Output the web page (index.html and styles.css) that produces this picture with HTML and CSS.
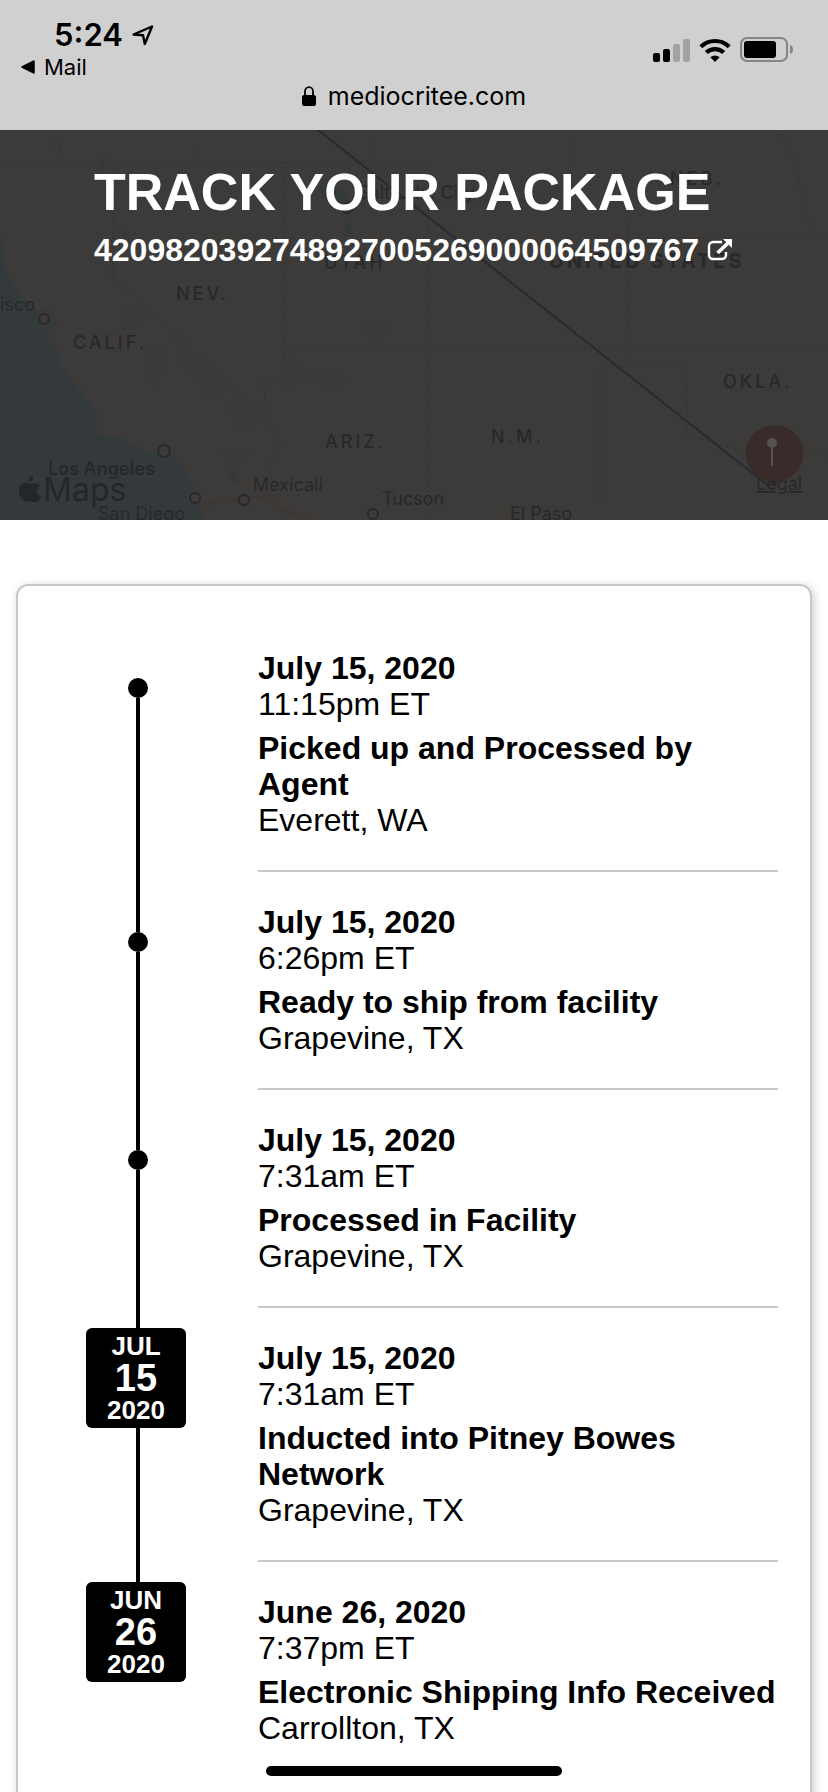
FILE: index.html
```
<!DOCTYPE html>
<html lang="en">
<head>
  <meta charset="UTF-8" />
  <meta name="viewport" content="width=device-width, initial-scale=1.0"/>
  <title>Track Your Package</title>
  <link rel="stylesheet" href="styles.css">
</head>
<body>
  <header class="browser-bar">
    <div class="status-row">
      <div class="status-left">
        <div class="clock">
          <span>5:24</span>
          <svg width="22" height="21" viewBox="0 0 22 21" aria-hidden="true">
            <path d="M1.500 9.500 20 1.500 12.800 19 11 10.300Z" fill="none" stroke="#000" stroke-width="2.400" stroke-linejoin="round"/>
          </svg>
        </div>
        <a class="back-link" href="#">
          <svg width="14" height="14" viewBox="0 0 14 14" aria-hidden="true">
            <path d="M1 7 13 1v12Z" stroke="#000" stroke-width="1.500" stroke-linejoin="round"/>
          </svg>
          Mail
        </a>
      </div>
      <div class="status-icons">
        <svg width="37" height="24" viewBox="0 0 37 24" aria-hidden="true">
          <rect x="0" y="15" width="7" height="9" rx="2"/>
          <rect x="10" y="11" width="7" height="13" rx="2"/>
          <rect x="20" y="6" width="7" height="18" rx="2" fill="#a2a2a2"/>
          <rect x="30" y="1" width="7" height="23" rx="2" fill="#a2a2a2"/>
        </svg>
        <svg width="32" height="24" viewBox="0 0 32 24" aria-hidden="true">
          <g fill="none" stroke="#000" stroke-width="4.200">
            <path d="M1.800 8.700a20.500 20.500 0 0 1 28.400 0"/>
            <path d="M7.300 14.600a12.500 12.500 0 0 1 17.400 0"/>
          </g>
          <path d="M16 24l-4.600-4.700a6.600 6.600 0 0 1 9.200 0Z"/>
        </svg>
        <svg width="54" height="25" viewBox="0 0 54 25" aria-hidden="true">
          <rect x="1" y="1" width="46" height="23" rx="6" fill="none" stroke="#858585" stroke-width="2"/>
          <rect x="4" y="4" width="32" height="17" rx="3"/>
          <path d="M50 8q3 1 3 4.500T50 17Z" fill="#858585"/>
        </svg>
      </div>
    </div>
    <div class="address">
      <svg width="14" height="20" viewBox="0 0 14 20" aria-hidden="true">
        <path d="M3 10V5.500a4 4.300 0 0 1 8 0V10" fill="none" stroke="#000" stroke-width="1.800"/>
        <rect x="0" y="9" width="14" height="11" rx="2"/>
      </svg>
      <span>mediocritee.com</span>
    </div>
  </header>

  <main>
    <section class="hero">
      <svg class="map" viewBox="0 130 828 390" preserveAspectRatio="xMidYMid slice">
        <rect y="130" width="828" height="390" fill="#3c3b39"/>
        <!-- ocean and lakes -->
        <g fill="#34393c">
          <path d="M0 236 4 246 6 270 14 285 26 300 36 310 44 325 50 344 62 352 60 364 76 386 90 402 97 410 97 434 118 436 138 446 148 451 164 453 180 464 192 480 196 500 204 520H0Z"/>
          <path d="M42 306l8 6 8 14-8 3-6-9Z"/>
          <path d="M53 139l6 2 4 9-3 3-4-6Z"/>
          <path d="M100 158q3-3 5 3l-2 12-5-6Z"/>
          <path d="M123 230l5 4 2 9-5-2Z"/>
          <path d="M111 267q5-3 6 5-1 7-4 6-4-3-2-11Z"/>
          <path d="M318 186l10-5 16 12 8 12-6 5-18-6Z"/>
          <path d="M346 223l5 2 1 9-7-2Z"/>
          <path d="M227 469l5 1 8 9-2 6-7-5Z"/>
        </g>
        <!-- parks and dry basins -->
        <g fill="#393a39">
          <path d="M174 340q26 20 44 45v10l-12-2-22-28Z"/>
          <path d="M228 408q20-12 31 2l-6 14-17 3Z"/>
          <path d="M150 345h12l-2 30-6 15-8-30Z"/>
          <path d="M288 358l12 10 34 2 14 12-10 4-34-5-18 5Z"/>
          <path d="M366 322h22l-6 20-14-4Z"/>
          <path d="M220 451l12 4 18-3-6 11-18-3Z"/>
          <path d="M121 308h14l4 16-16 6Z"/>
        </g>
        <!-- state lines -->
        <g class="borders">
          <path d="M0 162H370"/>
          <path d="M370 136v26h58"/>
          <path d="M199 150v12"/>
          <path d="M113 162v113L264 420"/>
          <path d="M284 162V382H264L266 415 281 445 270 460 270 475"/>
          <path d="M284 348H828"/>
          <path d="M428 210V520"/>
          <path d="M571 140v60H428"/>
          <path d="M628 200V366"/>
          <path d="M600 500V366H687V435L704 440 740 450 828 456"/>
          <path d="M628 238H828"/>
          <path d="M776 134 790 145 808 217 822 240"/>
        </g>
        <path d="M196 504 265 496 280 509 312 520" fill="none" stroke="#40312f" stroke-width="4" stroke-dasharray="1 2"/>
        <path d="M318 130 770 487" fill="none" stroke="#272a35" stroke-width="2"/>

        <g class="cities">
          <circle cx="347" cy="208" r="5"/>
          <circle cx="44" cy="319" r="5"/>
          <circle cx="164" cy="451" r="6"/>
          <circle cx="195" cy="498" r="5"/>
          <circle cx="244" cy="500" r="5"/>
          <circle cx="373" cy="514" r="5"/>
        </g>

        <g class="state-names">
          <text x="176" y="300">NEV.</text>
          <text x="73" y="349">CALIF.</text>
          <text x="324" y="269">UTAH</text>
          <text x="670" y="185">NEB.</text>
          <text x="325" y="448">ARIZ.</text>
          <text x="491" y="443">N.M.</text>
          <text x="723" y="388">OKLA.</text>
          <text class="country" x="549" y="268">UNITED STATES</text>
        </g>
        <g class="city-names">
          <text x="358" y="199">Salt Lake City</text>
          <text x="0" y="311">isco</text>
          <text class="major" x="48" y="475">Los Angeles</text>
          <text x="98" y="520">San Diego</text>
          <text x="253" y="491">Mexicali</text>
          <text x="382" y="505">Tucson</text>
          <text x="510" y="520">El Paso</text>
        </g>

        <!-- destination pin -->
        <path d="M774 487Q770 482 763 479A29 28 0 1 1 786 479Q778 482 774 487Z" fill="#382b2a"/>
        <path d="M772 448v18" stroke="#555251" stroke-width="2"/>
        <circle cx="772" cy="443" r="5" fill="#555251"/>

        <path d="M33 475q1 6-5 7 0-5 5-7ZM19 491c0-9 7-9 11-7 5-2 8-1 10 2-5 3-4 9 1 11-3 7-6 6-11 4-5 3-11-3-11-10Z" fill="#252628"/>
        <text class="map-brand" x="43" y="501">Maps</text>
        <a href="#"><text class="legal" x="756" y="490">Legal</text></a>
      </svg>
      <div class="hero-text">
        <h1>TRACK YOUR PACKAGE</h1>
        <a class="tracking-link" href="#">
          4209820392748927005269000064509767
          <svg width="26" height="22" viewBox="0 0 26 22" aria-hidden="true">
            <path d="M15 3H6a4 4 0 0 0-4 4v9a4 4 0 0 0 4 4h9a4 4 0 0 0 4-4v-3" fill="none" stroke="#fff" stroke-width="2.400"/>
            <path d="M10.500 14 21 4" stroke="#fff" stroke-width="3.600"/>
            <path d="M16 0h9v9Z" fill="#fff"/>
          </svg>
        </a>
      </div>
    </section>

    <ol class="timeline">
      <li class="event">
        <div class="rail"><span class="dot"></span></div>
        <div class="details">
          <h2>July 15, 2020</h2>
          <p>11:15pm ET</p>
          <h3>Picked up and Processed by Agent</h3>
          <p>Everett, WA</p>
        </div>
      </li>
      <li class="event">
        <div class="rail"><span class="dot"></span></div>
        <div class="details">
          <h2>July 15, 2020</h2>
          <p>6:26pm ET</p>
          <h3>Ready to ship from facility</h3>
          <p>Grapevine, TX</p>
        </div>
      </li>
      <li class="event">
        <div class="rail"><span class="dot"></span></div>
        <div class="details">
          <h2>July 15, 2020</h2>
          <p>7:31am ET</p>
          <h3>Processed in Facility</h3>
          <p>Grapevine, TX</p>
        </div>
      </li>
      <li class="event">
        <div class="rail has-badge">
          <div class="date-badge"><span>JUL</span><span class="day">15</span><span>2020</span></div>
        </div>
        <div class="details">
          <h2>July 15, 2020</h2>
          <p>7:31am ET</p>
          <h3>Inducted into Pitney Bowes Network</h3>
          <p>Grapevine, TX</p>
        </div>
      </li>
      <li class="event">
        <div class="rail has-badge">
          <div class="date-badge"><span>JUN</span><span class="day">26</span><span>2020</span></div>
        </div>
        <div class="details">
          <h2>June 26, 2020</h2>
          <p>7:37pm ET</p>
          <h3>Electronic Shipping Info Received</h3>
          <p>Carrollton, TX</p>
        </div>
      </li>
    </ol>
  </main>

  <div class="home-indicator"></div>
</body>
</html>
```
FILE: styles.css
```
* {
  box-sizing: border-box;
  margin: 0;
  padding: 0;
}

body {
  display: flex;
  flex-direction: column;
  height: 100vh;
  background-color: #fff;
  color: #000;
  font-family: "Liberation Sans", Arial, Helvetica, sans-serif;
}

a {
  color: inherit;
  text-decoration: none;
}

/* browser bar */
.browser-bar {
  flex: none;
  padding: 17px 0 19px;
  background-color: #d0d0d0;
  font-family: Inter, Roboto, sans-serif;
}

.status-row {
  display: flex;
  justify-content: space-between;
  align-items: flex-start;
  padding: 0 34px 0 21px;
}

.clock {
  display: flex;
  align-items: center;
  gap: 9px;
  padding-left: 33px;
  font-size: 31px;
  font-weight: 600;
  line-height: 36px;
}

.back-link {
  display: flex;
  align-items: center;
  gap: 9px;
  font-size: 22px;
  line-height: 28px;
}

.status-icons {
  display: flex;
  align-items: center;
  gap: 9px;
  padding-top: 20px;
}

.address {
  display: flex;
  justify-content: center;
  align-items: center;
  gap: 12px;
  font-size: 25px;
  line-height: 30px;
}

/* scrolling page */
main {
  flex: 1;
  min-height: 0;
  overflow-y: auto;
  scrollbar-width: none;
}

.hero {
  position: relative;
  min-height: 390px;
  padding: 32px 94px;
  background-color: #3c3b39;
  color: #fff;
}

.map {
  position: absolute;
  inset: 0;
  width: 100%;
  height: 100%;
}

.hero-text {
  position: relative;
}

h1 {
  font-size: 52px;
  line-height: 60px;
}

.tracking-link {
  display: flex;
  align-items: center;
  gap: 8px;
  margin-top: 10px;
  font-size: 32px;
  font-weight: bold;
  line-height: 36px;
}

.tracking-link svg {
  flex: none;
}

/* map artwork */
.map text {
  fill: #28282a;
  font-family: Inter, Roboto, sans-serif;
  font-size: 18px;
}

.borders {
  fill: none;
  stroke: #333231;
  stroke-width: 1;
  stroke-dasharray: 2 3;
}

.cities {
  fill: #3c3b39;
  stroke: #29292a;
  stroke-width: 2;
}

.map .state-names text {
  font-weight: 500;
  letter-spacing: 3px;
}

.map .state-names .country {
  font-size: 20px;
  font-weight: 700;
}

.map .city-names .major {
  font-weight: 600;
}

.map .map-brand {
  fill: #252628;
  font-size: 32px;
}

.map .legal {
  text-decoration: underline;
}

/* timeline card */
.timeline {
  margin: 64px 16px 0;
  padding: 32px 32px 32px 0;
  border: 2px solid #c8c8c8;
  border-radius: 12px;
  box-shadow: 2px 2px 10px rgba(0, 0, 0, 0.2);
  list-style: none;
}

.event {
  display: grid;
  grid-template-columns: 240px 1fr;
}

.rail {
  display: flex;
  flex-direction: column;
  align-items: center;
}

.rail::before,
.rail::after {
  content: "";
  width: 4px;
  background-color: #000;
}

.rail::before {
  height: 60px;
}

.rail.has-badge::before {
  height: 20px;
}

.rail::after {
  flex: 1;
}

.event:first-child .rail::before,
.event:last-child .rail::after {
  background-color: transparent;
}

.dot {
  width: 20px;
  height: 20px;
  border-radius: 50%;
  background-color: #000;
}

.date-badge {
  display: flex;
  flex-direction: column;
  align-items: center;
  width: 100px;
  height: 100px;
  margin-right: 4px;
  padding-top: 4px;
  border-radius: 6px;
  background-color: #000;
  color: #fff;
  font-size: 26px;
  font-weight: bold;
  line-height: 28px;
}

.date-badge .day {
  font-size: 38px;
  line-height: 36px;
}

.details {
  padding: 32px 0;
  border-bottom: 2px solid #c8c8c8;
  font-size: 32px;
  line-height: 36px;
}

.event:last-child .details {
  border-bottom: none;
}

.details h2,
.details h3 {
  font-size: 32px;
}

.details h3 {
  margin-top: 8px;
}

.home-indicator {
  position: fixed;
  bottom: 16px;
  left: 50%;
  width: 296px;
  height: 10px;
  margin-left: -148px;
  border-radius: 5px;
  background-color: #000;
}
```
